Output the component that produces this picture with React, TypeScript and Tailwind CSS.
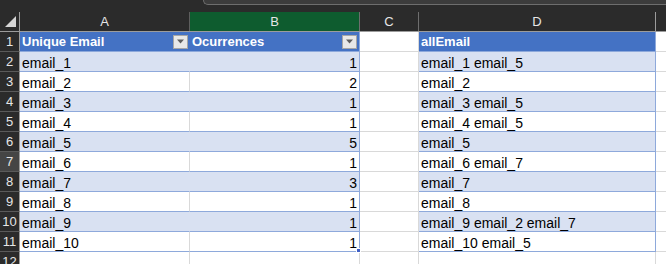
import React from "react";

const rows: [string, number, string][] = [
  ["email_1", 1, "email_1 email_5"],
  ["email_2", 2, "email_2"],
  ["email_3", 1, "email_3 email_5"],
  ["email_4", 1, "email_4 email_5"],
  ["email_5", 5, "email_5"],
  ["email_6", 1, "email_6 email_7"],
  ["email_7", 3, "email_7"],
  ["email_8", 1, "email_8"],
  ["email_9", 1, "email_9 email_2 email_7"],
  ["email_10", 1, "email_10 email_5"],
];

function FilterBtn() {
  return (
    <div className="w-[15px] h-[14px] bg-[#e8e8e8] border border-[#a6a6a6] flex items-center justify-center mr-[2px]">
      <svg width="9" height="5" viewBox="0 0 9 5">
        <polygon points="1,0.5 8,0.5 4.5,4.5" fill="#5f5f5f" />
      </svg>
    </div>
  );
}

export default function App() {
  return (
    <div
      className="w-[666px] h-[264px] overflow-hidden bg-white text-[14px] text-black"
      style={{ fontFamily: '"Liberation Sans", Arial, sans-serif' }}
    >
      {/* top bar */}
      <div className="h-[12px] bg-[#2b2b2b] flex items-start">
        <div className="w-[203px] shrink-0" />
        <div className="flex-1 h-[5px] bg-[#3c3c3c] border-l border-b border-[#6e6e6e] rounded-bl-[5px]" />
      </div>
      {/* column headers */}
      <div className="flex h-[20px] bg-[#2b2b2b] border-b border-[#9c9c9c] text-[13px] text-[#e6e6e6]">
        <div className="w-[20px] shrink-0 border-r border-[#9c9c9c] flex items-start">
          <svg width="19" height="19" viewBox="0 0 19 19">
            <polygon points="16,4 16,15 5,15" fill="#d6d6d6" />
          </svg>
        </div>
        <div className="w-[170px] shrink-0 border-r border-[#5e5e5e] flex items-center justify-center">A</div>
        <div className="w-[170px] shrink-0 border-r border-[#6e6e6e] bg-[#0e5c2f] flex items-center justify-center">B</div>
        <div className="w-[59px] shrink-0 border-r border-[#6e6e6e] flex items-center justify-center">C</div>
        <div className="w-[237px] shrink-0 border-r border-[#9c9c9c] flex items-center justify-center">D</div>
        <div className="flex-1" />
      </div>
      {/* row 1 header */}
      <div className="flex h-[20px]">
        <div className="w-[20px] shrink-0 bg-[#2b2b2b] border-r border-b border-r-[#9c9c9c] border-b-[#5a5a5a] text-[13px] text-[#e6e6e6] flex items-center justify-center">1</div>
        <div className="w-[340px] shrink-0 bg-[#4472c4] border-b border-[#8ea9db] flex text-white font-bold text-[13px]">
          <div className="w-[170px] flex items-center justify-between pl-[2px]">
            <span>Unique Email</span>
            <FilterBtn />
          </div>
          <div className="w-[170px] flex items-center justify-between pl-[2px] border-r border-[#8ea9db]">
            <span>Ocurrences</span>
            <FilterBtn />
          </div>
        </div>
        <div className="w-[59px] shrink-0 border-r border-b border-[#d9d9d9]" />
        <div className="w-[237px] shrink-0 bg-[#4472c4] border-b border-r border-[#8ea9db] text-white font-bold text-[13px] flex items-center pl-[2px]">allEmail</div>
        <div className="flex-1 border-b border-[#d9d9d9]" />
      </div>
      {rows.map(([a, b, d], i) => {
        const n = i + 2;
        const band = i % 2 === 0;
        const bg = band ? "bg-[#d9e1f2]" : "bg-white";
        return (
          <div key={n} className="flex h-[20px]">
            <div
              className={`w-[20px] shrink-0 border-r border-b border-r-[#9c9c9c] border-b-[#5a5a5a] text-[13px] text-[#e6e6e6] flex items-center justify-center ${n === 7 ? "bg-[#454545]" : "bg-[#2b2b2b]"}`}
            >
              {n}
            </div>
            <div className={`w-[170px] shrink-0 border-b border-r border-b-[#8ea9db] ${band ? "border-r-[#d9e1f2]" : "border-r-[#d9d9d9]"} ${bg} flex items-end leading-[16px] pl-[2px]`}>
              {a}
            </div>
            <div className={`relative w-[170px] shrink-0 border-b border-r border-[#8ea9db] ${bg} flex items-end justify-end leading-[16px] pr-[2px]`}>
              {b}
              {n === 11 && <div className="absolute right-[-2px] bottom-[-2px] w-[5px] h-[5px] bg-[#3f5fc6] border border-white" />}
            </div>
            <div className="w-[59px] shrink-0 border-r border-b border-[#d9d9d9]" />
            <div className={`w-[237px] shrink-0 border-b border-r border-[#8ea9db] ${bg} flex items-end leading-[16px] pl-[2px] whitespace-nowrap`}>
              {d}
            </div>
            <div className="flex-1 border-b border-[#d9d9d9]" />
          </div>
        );
      })}
      {/* row 12 */}
      <div className="flex h-[20px]">
        <div className="w-[20px] shrink-0 bg-[#2b2b2b] border-r border-[#9c9c9c] text-[13px] text-[#e6e6e6] flex items-center justify-center">12</div>
        <div className="w-[170px] shrink-0 border-r border-[#d9d9d9]" />
        <div className="w-[170px] shrink-0 border-r border-[#d9d9d9]" />
        <div className="w-[59px] shrink-0 border-r border-[#d9d9d9]" />
        <div className="w-[237px] shrink-0 border-r border-[#d9d9d9]" />
        <div className="flex-1" />
      </div>
    </div>
  );
}
